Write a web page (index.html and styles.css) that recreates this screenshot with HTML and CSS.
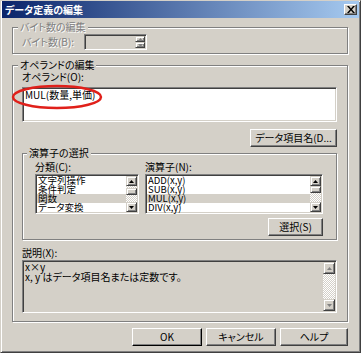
FILE: index.html
```html
<!DOCTYPE html>
<html lang="ja">
  <head>
    <meta charset="UTF-8" />
    <title>データ定義の編集</title>
    <link rel="stylesheet" href="styles.css">
  </head>
  <body>
    <div class="window">
      <div class="titlebar">
        <span class="title">データ定義の編集</span>
        <span class="close-btn">
          <svg width="8" height="7" viewBox="0 0 8 7"><path d="M0 0H2L4 2.4L6 0H8L5 3.5L8 7H6L4 4.6L2 7H0L3 3.5Z" fill="#000"/></svg>
        </span>
      </div>

      <div class="dialog">
        <fieldset class="group group-bytes">
          <legend class="legend disabled">バイト数の編集</legend>
          <div class="byte-row">
            <span class="byte-label disabled">バイト数(B):</span>
            <div class="spin-edit sunken">
              <span class="spin-field"></span>
              <span class="spin-btns">
                <span class="spin-btn raised"><svg width="5" height="3" viewBox="0 0 5 3"><path d="M2.5 0L5 3H0Z" fill="#808080"/></svg></span>
                <span class="spin-btn raised"><svg width="5" height="3" viewBox="0 0 5 3"><path d="M0 0H5L2.5 3Z" fill="#808080"/></svg></span>
              </span>
            </div>
          </div>
        </fieldset>

        <fieldset class="group group-operand">
          <legend class="legend">オペランドの編集</legend>
          <div class="field-label">オペランド(O):</div>
          <div class="operand-edit sunken">
            <span class="operand-text">MUL(数量,単価)</span>
            <svg class="mark" width="92" height="26" viewBox="0 0 92 26"><ellipse cx="46" cy="13" rx="44" ry="11" fill="none" stroke="#e0201a" stroke-width="2.5"/></svg>
          </div>
          <div class="btn-row">
            <button class="btn btn-item">データ項目名(D...</button>
          </div>

          <fieldset class="group group-ops">
            <legend class="legend legend-ops">演算子の選択</legend>
            <div class="lists">
              <div class="list-col col-cat">
                <div class="field-label">分類(C):</div>
                <div class="listbox sunken">
                  <ul class="items">
                    <li>文字列操作</li>
                    <li>条件判定</li>
                    <li class="sel">関数</li>
                    <li>データ変換</li>
                  </ul>
                  <div class="vscroll">
                    <span class="sb-btn raised"><svg width="5" height="3" viewBox="0 0 5 3"><path d="M2.5 0L5 3H0Z"/></svg></span>
                    <span class="sb-track sb-gap"></span>
                    <span class="sb-thumb raised"></span>
                    <span class="sb-track"></span>
                    <span class="sb-btn raised"><svg width="5" height="3" viewBox="0 0 5 3"><path d="M0 0H5L2.5 3Z"/></svg></span>
                  </div>
                </div>
              </div>
              <div class="list-col col-op">
                <div class="field-label">演算子(N):</div>
                <div class="listbox sunken">
                  <ul class="items">
                    <li>ADD(x,y)</li>
                    <li>SUB(x,y)</li>
                    <li class="sel">MUL(x,y)</li>
                    <li>DIV(x,y)</li>
                  </ul>
                  <div class="vscroll">
                    <span class="sb-btn raised"><svg width="5" height="3" viewBox="0 0 5 3"><path d="M2.5 0L5 3H0Z"/></svg></span>
                    <span class="sb-thumb raised"></span>
                    <span class="sb-track"></span>
                    <span class="sb-btn raised"><svg width="5" height="3" viewBox="0 0 5 3"><path d="M0 0H5L2.5 3Z"/></svg></span>
                  </div>
                </div>
              </div>
            </div>
            <div class="btn-row">
              <button class="btn btn-select">選択(S)</button>
            </div>
          </fieldset>

          <div class="field-label label-desc">説明(X):</div>
          <div class="desc sunken">
            <div class="desc-text">
              <div>x×y</div>
              <div>x, y はデータ項目名または定数です。</div>
            </div>
            <div class="vscroll desc-scroll">
              <span class="sb-btn raised"><svg width="5" height="3" viewBox="0 0 5 3"><path d="M2.5 0L5 3H0Z" fill="#808080"/></svg></span>
              <span class="sb-track"></span>
              <span class="sb-btn raised"><svg width="5" height="3" viewBox="0 0 5 3"><path d="M0 0H5L2.5 3Z" fill="#808080"/></svg></span>
            </div>
          </div>
        </fieldset>

        <div class="footer">
          <button class="btn btn-foot btn-default">OK</button>
          <button class="btn btn-foot">キャンセル</button>
          <button class="btn btn-foot btn-help">ヘルプ</button>
        </div>
      </div>
    </div>
  </body>
</html>
```

FILE: styles.css
```css
/* Base */
* {
  box-sizing: border-box;
}
html,
body {
  margin: 0;
  padding: 0;
}
body {
  width: 361px;
  height: 353px;
  overflow: hidden;
  background: #d4d0c8;
  color: #000;
  font-family: "Noto Sans CJK JP", "Liberation Sans", sans-serif;
  font-size: 10px;
  font-feature-settings: "palt";
  line-height: 12px;
}

/* Window frame */
.window {
  width: 361px;
  height: 353px;
  border: 1px solid;
  border-color: #d4d0c8 #404040 #404040 #d4d0c8;
  box-shadow: inset 1px 1px 0 #fff, inset -1px -1px 0 #808080;
  padding: 0 1px 1px 1px;
  display: flex;
  flex-direction: column;
}
.titlebar {
  height: 17px;
  flex: none;
  display: flex;
  align-items: center;
  justify-content: space-between;
  padding: 0 2px 0 3px;
  background: linear-gradient(to right, #0a246a, #a6caf0);
}
.title {
  color: #fff;
  font-weight: bold;
  font-size: 10px;
  line-height: 17px;
}
.close-btn {
  width: 13px;
  height: 11px;
  display: flex;
  align-items: center;
  justify-content: center;
  background: #d4d0c8;
  border: 1px solid;
  border-color: #fff #404040 #404040 #fff;
  box-shadow: inset -1px -1px 0 #808080;
}

/* Bevels */
.sunken {
  border: 1px solid;
  border-color: #808080 #fff #fff #808080;
  padding: 1px;
  box-shadow: inset 1px 1px 0 #404040, inset -1px -1px 0 #d4d0c8;
}
.raised {
  background: #d4d0c8;
  border: 1px solid;
  border-color: #d4d0c8 #404040 #404040 #d4d0c8;
  box-shadow: inset 1px 1px 0 #fff, inset -1px -1px 0 #808080;
}
.disabled {
  color: #808080;
  text-shadow: 1px 1px 0 #fff;
}

/* Dialog body */
.dialog {
  flex: 1;
  padding: 3px 11px 0 10px;
}
.group {
  margin: 0;
  min-inline-size: 0;
  border: 1px solid #808080;
  box-shadow: 1px 1px 0 #fff, inset 1px 1px 0 #fff;
}
.legend {
  padding: 0 2px;
  margin-left: -4px;
  line-height: 12px;
  background: #d4d0c8;
}
.field-label {
  line-height: 12px;
  white-space: nowrap;
}

/* Byte count group */
.group-bytes {
  padding: 1px 10px 3px 9px;
}
.byte-row {
  display: flex;
  align-items: center;
}
.byte-label {
  width: 62px;
}
.spin-edit {
  width: 63px;
  height: 16px;
  display: flex;
}
.spin-field {
  flex: 1;
}
.spin-btns {
  width: 10px;
  display: flex;
  flex-direction: column;
}
.spin-btn {
  flex: 1;
  display: flex;
  align-items: center;
  justify-content: center;
}

/* Operand group */
.group-operand {
  margin-top: 5px;
  padding: 0 10px 8px 9px;
}
.operand-edit {
  position: relative;
  margin-top: 4px;
  height: 35px;
  background: #fff;
  padding: 1px 2px;
}
.mark {
  position: absolute;
  left: -12px;
  top: -4px;
}
.btn-row {
  display: flex;
  justify-content: flex-end;
}
.btn {
  font-family: inherit;
  font-size: 10px;
  font-feature-settings: "palt";
  color: #000;
  padding: 0;
  height: 18px;
  line-height: 14px;
  background: #d4d0c8;
  border: 1px solid;
  border-color: #fff #404040 #404040 #fff;
  box-shadow: inset -1px -1px 0 #808080;
  white-space: nowrap;
  overflow: hidden;
}
.btn-item {
  margin-top: 7px;
  width: 87px;
}

/* Operator selection */
.group-ops {
  padding: 2px 13px 3px 12px;
}
.legend-ops {
  margin-left: -8px;
}
.lists {
  display: flex;
  gap: 6px;
}
.col-cat {
  width: 104px;
}
.col-op {
  width: 178px;
}
.listbox {
  margin-top: 1px;
  height: 40px;
  background: #fff;
  display: flex;
}
.items {
  flex: 1;
  margin: 0;
  padding: 0;
  list-style: none;
}
.items li {
  height: 9px;
  line-height: 9px;
  font-size: 9.5px;
  padding-left: 1px;
  white-space: nowrap;
}
.items li.sel {
  background: #d4d0c8;
}
.vscroll {
  width: 11px;
  display: flex;
  flex-direction: column;
  background: repeating-conic-gradient(#fff 0 25%, #d4d0c8 0 50%) 0 0 / 2px 2px;
}
.sb-btn {
  height: 10px;
  flex: none;
  display: flex;
  align-items: center;
  justify-content: center;
}
.sb-thumb {
  height: 7px;
  flex: none;
}
.sb-track {
  flex: 1;
}
.sb-gap {
  flex: none;
  height: 2px;
}
.btn-select {
  margin-top: 4px;
  width: 55px;
}

/* Description */
.label-desc {
  margin-top: 7px;
}
.desc {
  margin-top: 1px;
  height: 53px;
  background: #d4d0c8;
  display: flex;
}
.desc-text {
  flex: 1;
  padding-left: 1px;
  line-height: 10px;
}
.desc-scroll {
  width: 12px;
}
.desc-scroll .sb-btn {
  height: 12px;
}

/* Footer buttons */
.footer {
  margin-top: 6px;
  display: flex;
  justify-content: flex-end;
  gap: 4px;
}
.btn-foot {
  width: 70px;
}
.btn-help {
  width: 68px;
}
.btn-default {
  border-color: #fff #000 #000 #fff;
  box-shadow: inset -1px -1px 0 #808080;
}
```
